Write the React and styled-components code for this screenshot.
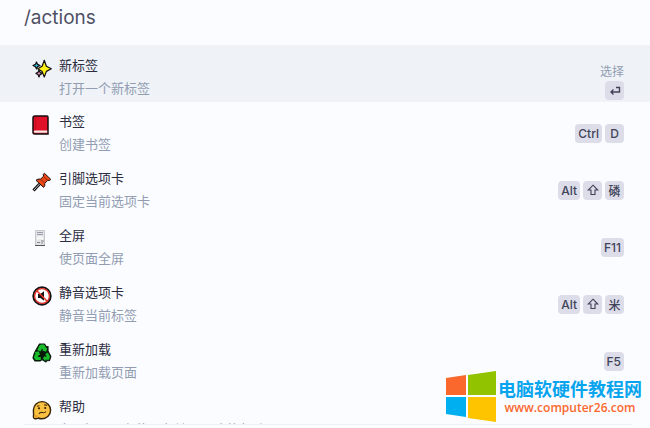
import React from "react";
import styled, { createGlobalStyle } from "styled-components";

const GlobalStyle = createGlobalStyle`
  * { box-sizing: border-box; }
  body {
    margin: 0;
    background: #fbfcff;
    font-family: Inter, "Noto Sans CJK SC", sans-serif;
  }
`;

const Page = styled.main`
  position: relative;
  display: flex;
  flex-direction: column;
  height: 100vh;
  overflow: hidden;
`;

const SearchInput = styled.input`
  flex: none;
  width: 100%;
  height: 45px;
  padding: 0 24px 11px;
  border: 0;
  outline: 0;
  background: transparent;
  color: #4e5064;
  font: 400 19px Inter, "Noto Sans CJK SC", sans-serif;
`;

const ActionList = styled.ul`
  flex: 1;
  min-height: 0;
  margin: 0;
  padding: 0;
  overflow: hidden;
  list-style: none;
`;

const ActionRow = styled.li`
  display: flex;
  gap: 7px;
  padding: ${(p) => (p.$active ? "9px 26px 2px 32px" : "8px 26px 3px 32px")};
  background: ${(p) => (p.$active ? "#eff2f7" : "transparent")};
`;

const ActionIcon = styled.svg`
  flex: none;
  width: 20px;
  height: 20px;
  margin-top: 5px;
`;

const ActionText = styled.div`
  display: flex;
  flex-direction: column;
  align-items: flex-start;
  min-width: 0;
  font-size: 13px;
  line-height: 23px;
`;

const Title = styled.div`
  color: #2b2d41;
`;

const Description = styled.div`
  color: #929db2;
`;

const Shortcut = styled.div`
  display: flex;
  flex-direction: column;
  align-items: flex-end;
  align-self: ${(p) => (p.$active ? "flex-end" : "center")};
  margin-left: auto;
`;

const Hint = styled.span`
  color: #929db2;
  font-size: 12px;
  line-height: 18px;
`;

const Keys = styled.div`
  display: flex;
  gap: 3px;
`;

const Key = styled.kbd`
  display: flex;
  align-items: center;
  justify-content: center;
  min-width: 19px;
  height: 19px;
  padding: 0 3px;
  border-radius: 4px;
  background: #dcdde9;
  color: #414359;
  font: 500 12px Inter, "Noto Sans CJK SC", sans-serif;
`;

const KeyGlyph = styled.svg`
  width: 12px;
  height: 12px;
`;

const Footer = styled.footer`
  flex: none;
  height: 4px;
  margin: 0 18px 0 24px;
  border-top: 1px solid #eff1f6;
`;

const Brand = styled.a`
  position: absolute;
  right: 8px;
  bottom: 5px;
  display: flex;
  align-items: center;
  gap: 2px;
  text-decoration: none;
`;

const BrandMark = styled.svg`
  width: 50px;
  height: 52px;
`;

const BrandText = styled.span`
  display: flex;
  flex-direction: column;
  align-items: center;
`;

const BrandName = styled.span`
  color: #08a5ee;
  font: 700 18px/22px "Noto Sans CJK SC", sans-serif;
`;

const BrandUrl = styled.span`
  color: #fa682e;
  font: 600 12px/18px "Open Sans", sans-serif;
`;

const drawings = {
  sparkles: (
    <g stroke="#111" strokeWidth="1.2" strokeLinejoin="round">
      <path d="M4.5 3 5.6 5.4 8 6.5 5.6 7.6 4.5 10 3.4 7.6 1 6.5 3.4 5.4Z" fill="#38c8e8" />
      <path d="M7 11 8 13.3 10.2 14.4 8 15.6 7 18 6 15.6 4 14.4 6 13.3Z" fill="#ed91c4" />
      <path d="M12.3 1.2 14.4 7.2 19.3 9.8 14.4 12.4 12.3 18 10.1 12.4 5.8 9.8 10.1 7.2Z" fill="#fff018" />
    </g>
  ),
  book: (
    <g>
      <path d="M3 1H15Q16 1 16 2.5V19H2.5Q1 19 1 17V3Q1 1 3 1Z" fill="#df1028" stroke="#170b0e" strokeWidth="1.5" />
      <path d="M3 15.4H15.2V17.8H3Q1.8 17.8 1.8 16.6T3 15.4Z" fill="#f8e8e4" />
      <path d="M3.6 2.5V14.5" stroke="#c50c23" strokeWidth="1" />
    </g>
  ),
  pin: (
    <g stroke="#180e0d" strokeLinejoin="round">
      <path d="M7.5 12 1.5 18.5" strokeWidth="3" />
      <path d="M7.5 12 2 18" stroke="#b8c4cc" strokeWidth="1" />
      <path d="M12.4 1.2 18.8 7.4 17.2 8.7 15.8 8.2 12.8 11.3Q13.3 14 11.6 15.4L4 8.3Q5.6 6.6 8.6 7.1L11.7 4.1 11.2 2.5Z" fill="#e94718" />
      <path d="M11.5 4.5 15.4 8.4M8.6 7.3 12.7 11.2" fill="none" stroke="#97250c" />
    </g>
  ),
  page: (
    <g>
      <path d="M3.5 1.5H12.5V16.5H3.5Z" fill="#e3e4e7" stroke="#c6c8cc" strokeWidth="1" />
      <path d="M5 3.5H11M5 5.5H11" stroke="#999ca2" />
      <path d="M5 7.5H11V10.5H5Z" fill="#f7f7f8" />
      <path d="M9 12H12M5 13.5H8M9 14H11" stroke="#85888e" />
      <path d="M3 16.5H13" stroke="#53565a" />
    </g>
  ),
  mute: (
    <g>
      <circle cx="10" cy="10" r="8.7" fill="#fff" stroke="#141112" strokeWidth="2" />
      <circle cx="10" cy="10" r="7.4" fill="none" stroke="#df2e25" strokeWidth="1.3" />
      <path d="M6 8H8.4L12 5.2V14.8L8.4 12H6Z" fill="#141112" />
      <path d="M4.8 4.8 15.2 15.2" stroke="#e43328" strokeWidth="1.5" />
    </g>
  ),
  recycle: (
    <g stroke="#071a0a" strokeWidth="1.2" strokeLinejoin="round">
      <path d="M7.5 1H12.5L14.5 4 16 3.5V8L18.8 13.5 17.5 17.5 14 17.8V19L10 16.5 8 18H3L1 15 2.5 10 4 7Z" fill="#071a0a" />
      <path d="M5.3 7 7.5 2.5 9 1.6H11.7L13 2.8 14 5 15.2 4.8 14.2 8.8 10.2 7.4 11 6.8 10 5.4 8.5 8.4Z" fill="#18bd2c" stroke="none" />
      <path d="M15.8 9.5 18 13.7 17 16.8H13.3V18.2L10.8 15.3 13.3 12.6V13.8L14.8 13.4 13.3 11Z" fill="#18bd2c" stroke="none" />
      <path d="M2.5 9.2 6.8 8.2 8.2 12 6.9 11.8 5.8 14H8.8V17H3.8L2 15 2.2 13.2 3.6 10.4Z" fill="#18bd2c" stroke="none" />
    </g>
  ),
  face: (
    <g>
      <path d="M1.4 10A8.6 8.6 0 1 1 10 18.8Q7.8 18.8 6.1 18 4.2 19.4 2.2 18.4 1 17.6 1.6 15Z" fill="#f9c13f" stroke="#36240a" strokeWidth="1.4" />
      <path d="M2.4 17.5Q2.1 15.8 3.4 14.4L5.5 15.3Q7 16.2 5.7 17.5 4 18.6 2.4 17.5Z" fill="#eba62c" />
      <circle cx="7" cy="8.3" r="1.1" fill="#38240c" />
      <circle cx="13.2" cy="8" r="1.1" fill="#38240c" />
      <path d="M5 6.3 7.4 5.8M12 5Q13.8 4.6 15 5.6M7 14Q8 11.8 10.4 12.5T14 11.5" fill="none" stroke="#4b2e0d" strokeWidth="1.1" />
    </g>
  ),
};

const glyphs = {
  Enter: <path d="M7 2.5H10.5V7H2M4.5 4.5 2 7 4.5 9.5" strokeWidth="1.4" />,
  Shift: <path d="M6 1.2 10.7 6H8V10.5H4V6H1.3Z" strokeWidth="1.1" />,
};

const actions = [
  { icon: "sparkles", title: "新标签", description: "打开一个新标签", keys: ["Enter"], hint: "选择" },
  { icon: "book", title: "书签", description: "创建书签", keys: ["Ctrl", "D"] },
  { icon: "pin", title: "引脚选项卡", description: "固定当前选项卡", keys: ["Alt", "Shift", "磷"] },
  { icon: "page", title: "全屏", description: "使页面全屏", keys: ["F11"] },
  { icon: "mute", title: "静音选项卡", description: "静音当前标签", keys: ["Alt", "Shift", "米"] },
  { icon: "recycle", title: "重新加载", description: "重新加载页面", keys: ["F5"] },
  { icon: "face", title: "帮助", description: "在 GitHub 上获取有关 Omni 的帮助", keys: [] },
];

function ShortcutKey({ name }) {
  return (
    <Key aria-label={name}>
      {glyphs[name] ? (
        <KeyGlyph viewBox="0 0 12 12" fill="none" stroke="#414359" aria-hidden="true">
          {glyphs[name]}
        </KeyGlyph>
      ) : (
        name
      )}
    </Key>
  );
}

function Action({ icon, title, description, keys, hint }) {
  const active = Boolean(hint);
  return (
    <ActionRow $active={active}>
      <ActionIcon viewBox="0 0 20 20" aria-hidden="true">{drawings[icon]}</ActionIcon>
      <ActionText>
        <Title>{title}</Title>
        <Description>{description}</Description>
      </ActionText>
      <Shortcut $active={active}>
        {hint && <Hint>{hint}</Hint>}
        <Keys>
          {keys.map((key) => <ShortcutKey key={key} name={key} />)}
        </Keys>
      </Shortcut>
    </ActionRow>
  );
}

export default function App() {
  return (
    <>
      <GlobalStyle />
      <Page>
        <SearchInput aria-label="搜索操作" defaultValue="/actions" />
        <ActionList>
          {actions.map((action) => <Action key={action.title} {...action} />)}
        </ActionList>
        <Footer />
        <Brand href="http://www.computer26.com">
          <BrandMark viewBox="0 0 50 52" aria-hidden="true">
            <path d="M0 7 20 4V24H0Z" fill="#fa682e" />
            <path d="M22 4 50 0V24H22Z" fill="#91c300" />
            <path d="M0 26H20V46L0 43Z" fill="#00aff0" />
            <path d="M22 26H50V51L22 47Z" fill="#ffc400" />
          </BrandMark>
          <BrandText>
            <BrandName>电脑软硬件教程网</BrandName>
            <BrandUrl>www.computer26.com</BrandUrl>
          </BrandText>
        </Brand>
      </Page>
    </>
  );
}
